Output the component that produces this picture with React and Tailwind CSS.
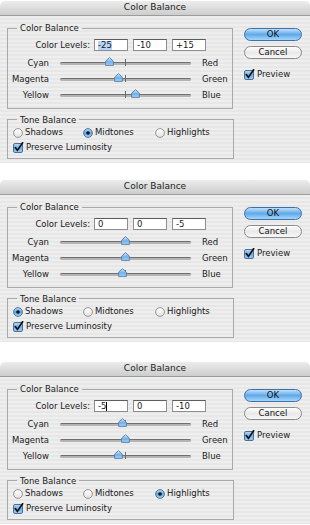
import React from 'react';

const dialogs = [
  { id: 1, levels: ['-25', '-10', '+15'], tone: 'Midtones', gap: 'mt-[1px]', selected: true },
  { id: 2, levels: ['0', '0', '-5'], tone: 'Shadows', gap: 'mt-[17px]' },
  { id: 3, levels: ['-5', '0', '-10'], tone: 'Highlights', gap: 'mt-[20px]', caret: true },
];

const rows = [
  ['Cyan', 'Red'],
  ['Magenta', 'Green'],
  ['Yellow', 'Blue'],
];

const Check = () => (
  <svg width="11" height="11" viewBox="0 0 11 11" className="shrink-0">
    <defs>
      <linearGradient id="cb" x1="0" y1="0" x2="0" y2="1">
        <stop offset="0" stopColor="#bcdcf8" />
        <stop offset="0.5" stopColor="#6aaee8" />
        <stop offset="1" stopColor="#9fd0f6" />
      </linearGradient>
    </defs>
    <rect x="0.5" y="1.5" width="9" height="9" rx="1.5" fill="url(#cb)" stroke="#4d6f97" />
    <path d="M2.3 5.6 L4.4 8.4 L9.6 0.8" fill="none" stroke="#111" strokeWidth="1.7" strokeLinecap="round" />
  </svg>
);

const Radio = ({ on }) => (
  <svg width="10" height="10" viewBox="0 0 10 10" className="shrink-0">
    <defs>
      <linearGradient id="rb" x1="0" y1="0" x2="0" y2="1">
        <stop offset="0" stopColor="#bcdcf8" />
        <stop offset="0.5" stopColor="#5ea6e6" />
        <stop offset="1" stopColor="#a5d3f7" />
      </linearGradient>
      <linearGradient id="rw" x1="0" y1="0" x2="0" y2="1">
        <stop offset="0" stopColor="#ffffff" />
        <stop offset="1" stopColor="#e2e2e2" />
      </linearGradient>
    </defs>
    <circle cx="5" cy="5" r="4.4" fill={on ? 'url(#rb)' : 'url(#rw)'} stroke={on ? '#4b6d95' : '#8a8a8a'} strokeWidth="0.9" />
    {on && <circle cx="5" cy="5" r="1.8" fill="#111" />}
  </svg>
);

const Thumb = () => (
  <svg width="9" height="9" viewBox="0 0 9 9">
    <defs>
      <linearGradient id="th" x1="0" y1="0" x2="0" y2="1">
        <stop offset="0" stopColor="#d9ecfc" />
        <stop offset="0.55" stopColor="#6cb0ea" />
        <stop offset="1" stopColor="#a9d6f8" />
      </linearGradient>
    </defs>
    <path d="M4.5 0.6 L8.4 4.2 L8.4 8.4 L0.6 8.4 L0.6 4.2 Z" fill="url(#th)" stroke="#5a7ca3" strokeWidth="0.9" strokeLinejoin="round" />
  </svg>
);

const Slider = ({ value }) => {
  const v = parseInt(value, 10);
  return (
    <div className="relative w-[131px] h-[3px] bg-[#b4b4b4] border-t border-[#6f6f6f] rounded-full">
      <div className="absolute left-[65px] top-[-4px] w-px h-[7px] bg-[#6a6a6a]" />
      <div className="absolute top-[-6px] -ml-[4.5px]" style={{ left: `${65.5 + v * 0.655}px` }}>
        <Thumb />
      </div>
    </div>
  );
};

const Field = ({ text, selected, caret }) => (
  <div className="flex items-center w-[34px] h-[12px] bg-white border border-[#8e8e8e] border-t-[#5e5e5e] pl-[3px] leading-none">
    <span className={selected ? 'bg-[#b6d4f5]' : ''}>{text}</span>
    {caret && <span className="w-px h-[9px] bg-black" />}
  </div>
);

const Dialog = ({ d }) => (
  <div className={`${d.gap} flex flex-col h-[162px]`}>
    <div className="h-[15px] rounded-t-[5px] bg-gradient-to-b from-[#ececec] to-[#cdcdcd] border-b border-[#9c9c9c] flex items-center justify-center text-[9px] text-[#222]">
      Color Balance
    </div>
    <div className="flex-1 flex bg-[repeating-linear-gradient(180deg,#eeeeee_0px,#eeeeee_2px,#e7e7e7_2px,#e7e7e7_4px)]">
      <div className="ml-[7px] w-[227px] flex flex-col">
        <fieldset className="mt-[6px] w-[226px] border border-[#a9a9a9] pb-[4px]">
          <legend className="ml-[9px] px-[3px] leading-[12px]">Color Balance</legend>
          <div className="flex items-center mt-[5px]">
            <span className="w-[82px] text-right">Color Levels:</span>
            <div className="ml-[4px] flex gap-[5px]">
              {d.levels.map((l, i) => (
                <Field key={i} text={l} selected={d.selected && i === 0} caret={d.caret && i === 0} />
              ))}
            </div>
          </div>
          <div className="mt-[4px]">
            {rows.map(([a, b], i) => (
              <div key={a} className="flex items-center h-[16px]">
                <span className="w-[41px] text-right">{a}</span>
                <div className="ml-[11px]">
                  <Slider value={d.levels[i]} />
                </div>
                <span className="ml-[11px]">{b}</span>
              </div>
            ))}
          </div>
        </fieldset>
        <fieldset className="mt-[5px] w-[227px] border border-[#a9a9a9] pb-[3px]">
          <legend className="ml-[9px] px-[3px] leading-[12px]">Tone Balance</legend>
          <div className="flex items-center h-[14px] pl-[5px]">
            {['Shadows', 'Midtones', 'Highlights'].map((t, i) => (
              <div key={t} className={`flex items-center gap-[2px] ${i === 0 ? 'w-[70px]' : i === 1 ? 'w-[72px]' : ''}`}>
                <Radio on={d.tone === t} />
                <span>{t}</span>
              </div>
            ))}
          </div>
          <div className="flex items-center gap-[2px] h-[15px] pl-[5px]">
            <Check />
            <span>Preserve Luminosity</span>
          </div>
        </fieldset>
      </div>
      <div className="ml-[10px] flex flex-col">
        <div className="mt-[12px] w-[58px] h-[13px] rounded-full border border-[#3f6fa8] bg-gradient-to-b from-[#bfe0fa] via-[#5fa9e8] to-[#a6d7fa] flex items-center justify-center text-[#111]">
          OK
        </div>
        <div className="mt-[5px] w-[58px] h-[13px] rounded-full border border-[#8a8a8a] bg-gradient-to-b from-[#ffffff] via-[#e9e9e9] to-[#f7f7f7] flex items-center justify-center text-[#111]">
          Cancel
        </div>
        <div className="mt-[9px] flex items-center gap-[2px]">
          <Check />
          <span>Preview</span>
        </div>
      </div>
    </div>
  </div>
);

export default function App() {
  return (
    <div className="w-[310px] h-[525px] bg-white overflow-hidden font-['DejaVu_Sans',sans-serif] text-[8.5px] text-[#1a1a1a]">
      {dialogs.map(d => (
        <Dialog key={d.id} d={d} />
      ))}
    </div>
  );
}
